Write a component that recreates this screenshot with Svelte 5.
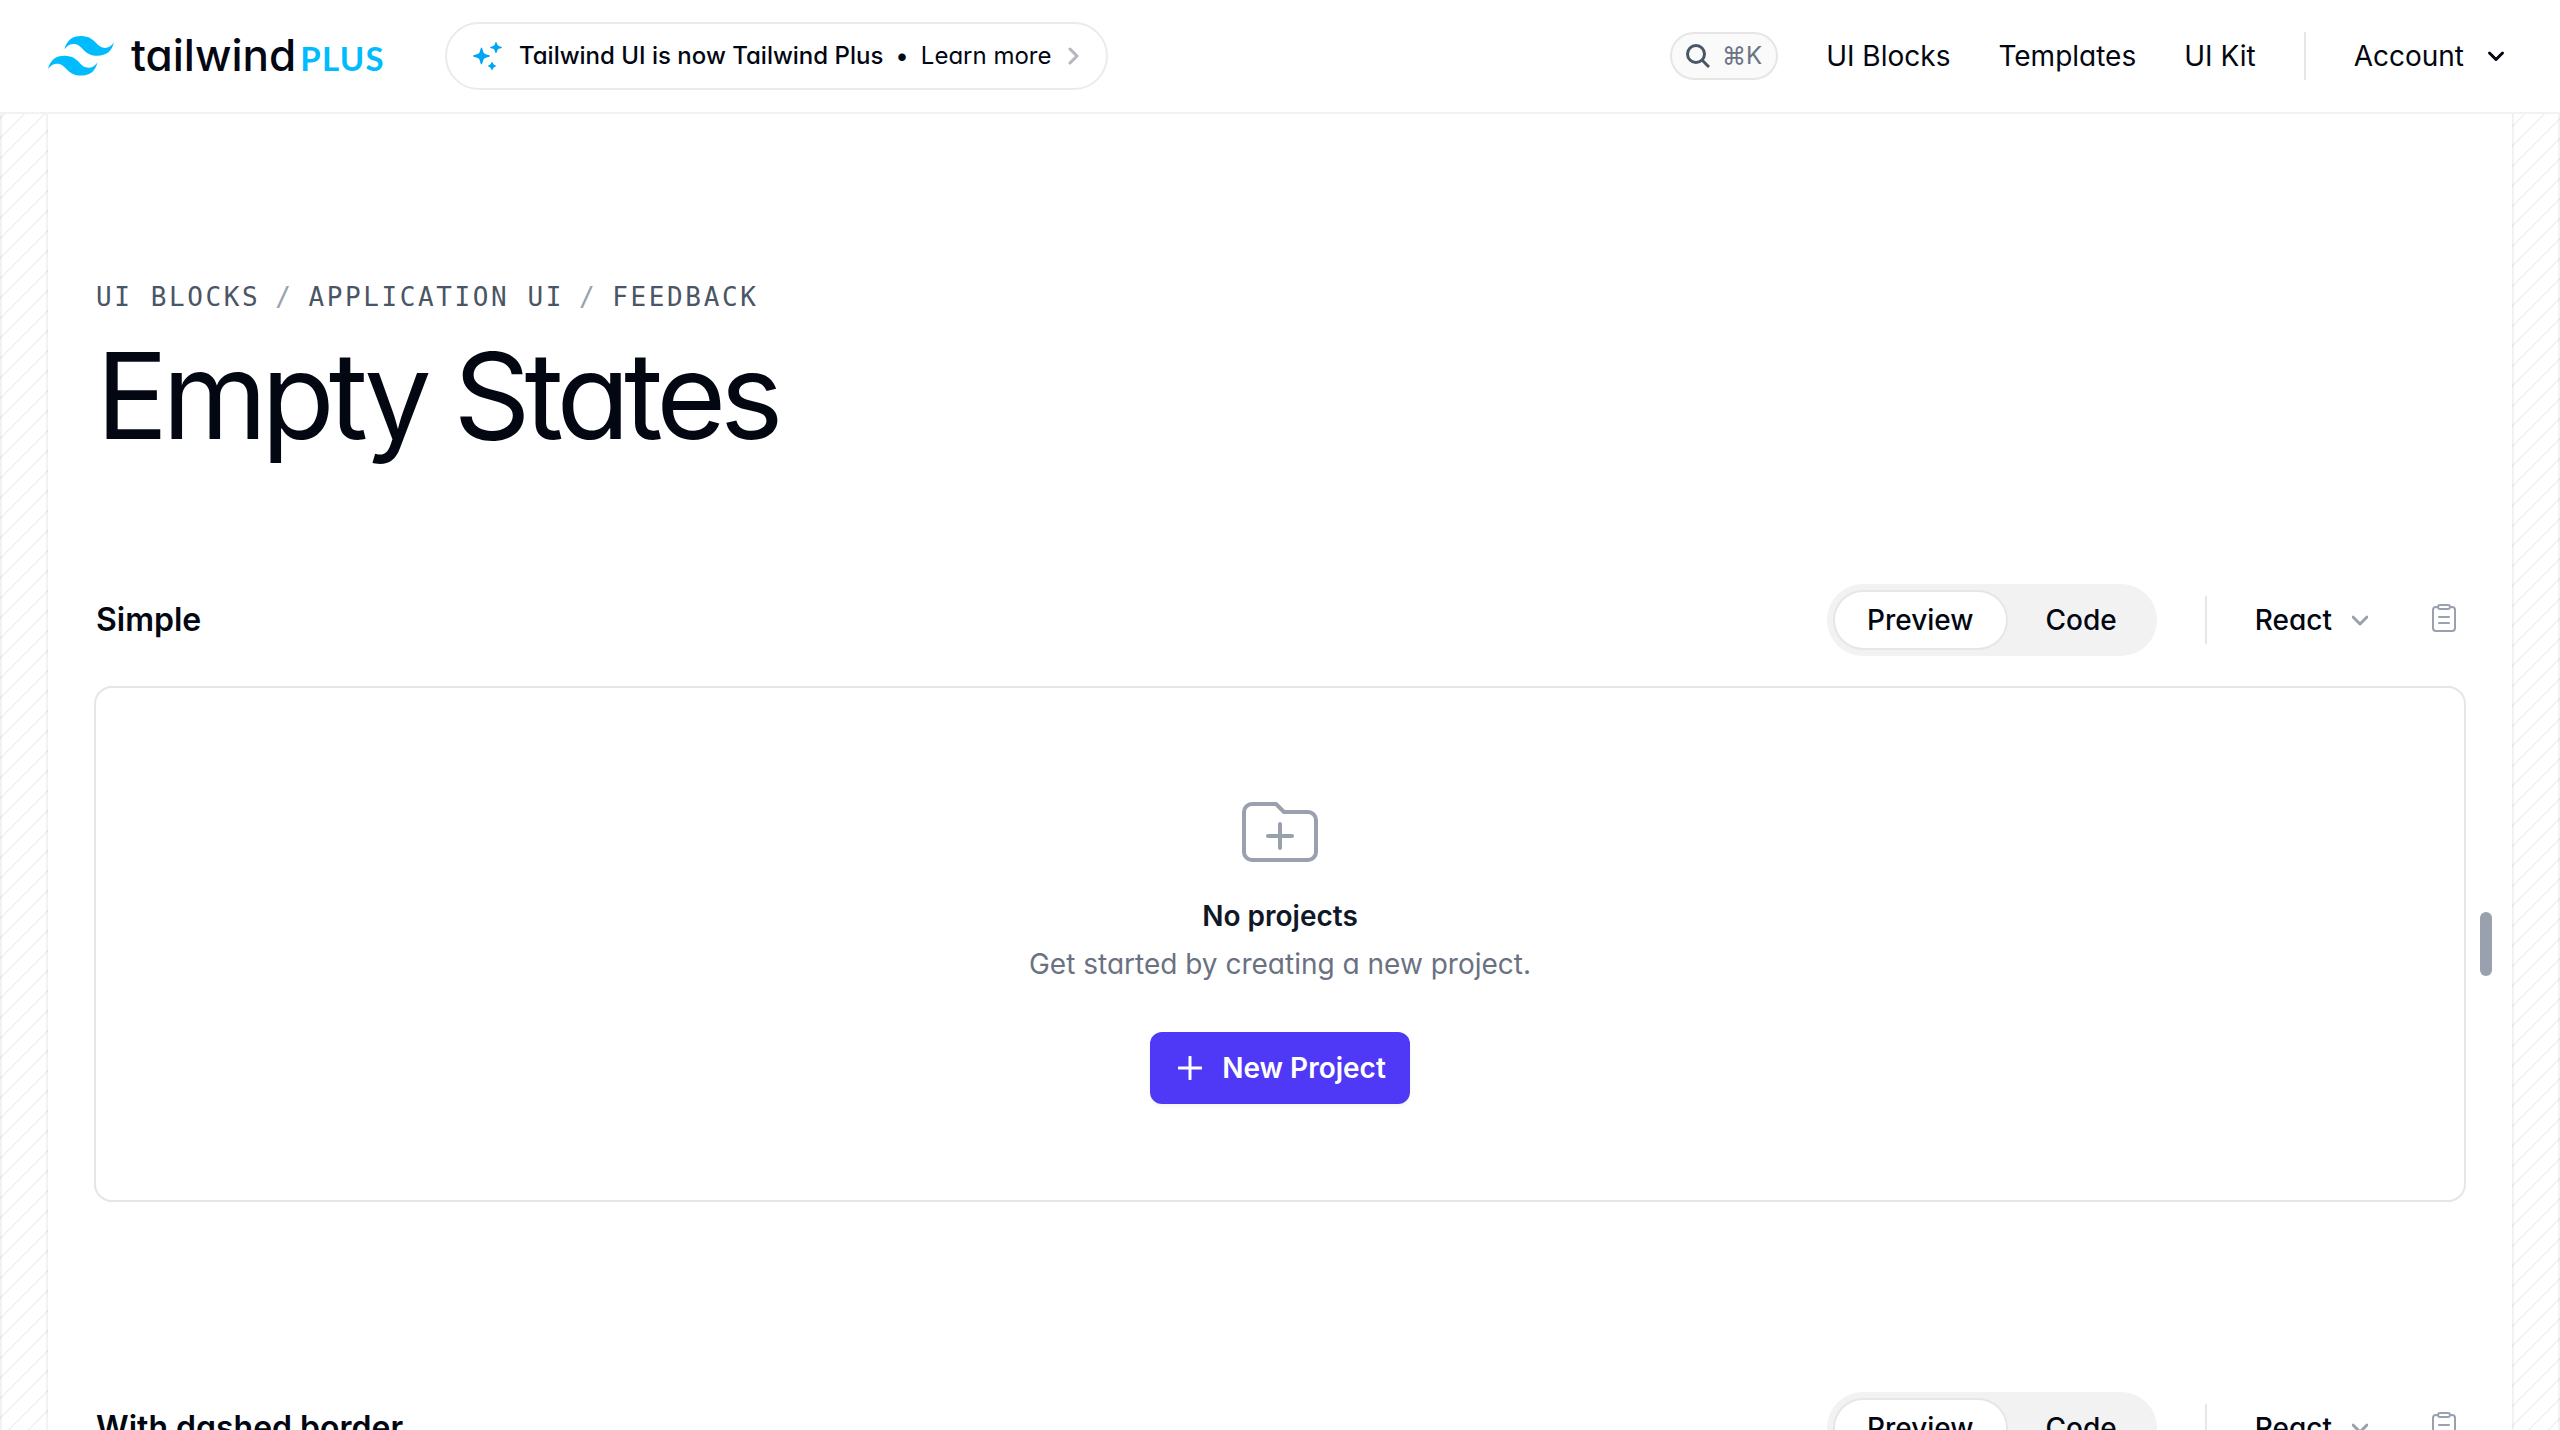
<script>
  const navLinks = ['UI Blocks', 'Templates', 'UI Kit'];
  const crumbs = ['UI Blocks', 'Application UI', 'Feedback'];

  let blocks = $state([
    { id: 'simple', title: 'Simple', tab: 'Preview', language: 'React' },
    { id: 'dashed', title: 'With dashed border', tab: 'Preview', language: 'React' },
  ]);
</script>

<div class="shell">
  <header class="topbar">
    <a class="logo" href="#home" aria-label="Tailwind Plus home">
      <svg class="mark" viewBox="0 0 54 32.4" aria-hidden="true">
        <path d="M27 0c-7.2 0-11.7 3.6-13.5 10.8 2.7-3.6 5.85-4.95 9.45-4.05 2.054.513 3.522 2.004 5.147 3.653C30.744 13.09 33.808 16.2 40.5 16.2c7.2 0 11.7-3.6 13.5-10.8-2.7 3.6-5.85 4.95-9.45 4.05-2.054-.513-3.522-2.004-5.147-3.653C36.756 3.11 33.692 0 27 0zM13.5 16.2C6.3 16.2 1.8 19.8 0 27c2.7-3.6 5.85-4.95 9.45-4.05 2.054.514 3.522 2.004 5.147 3.653C17.244 29.29 20.308 32.4 27 32.4c7.2 0 11.7-3.6 13.5-10.8-2.7 3.6-5.85 4.95-9.45 4.05-2.054-.513-3.522-2.004-5.147-3.653C23.256 19.31 20.192 16.2 13.5 16.2z" />
      </svg>
      <span class="wordmark">tailwind<span class="plus">PLUS</span></span>
    </a>

    <a class="banner" href="#plus">
      <svg class="sparkles" viewBox="0 0 30 28" aria-hidden="true">
        <path d="M8.500 5.500c1 0 1.500 4.500 2.600 5.800S17 13 17 14s-4.700 1.500-5.900 2.700S9.500 22.500 8.500 22.500s-1.500-4.600-2.600-5.800S0 15 0 14s4.700-1.500 5.900-2.700S7.500 5.500 8.500 5.500z" />
        <path d="M23 0c.9 0 1 2.600 1.900 3.600S29 4.700 29 5.500s-3.200 1-4.100 1.900S23.900 11 23 11s-1-2.700-1.900-3.600S17 6.300 17 5.500s3.200-1 4.100-1.900S22.100 0 23 0z" />
        <path d="M19 20c.7 0 .8 1.500 1.500 2.300S23 23.400 23 24s-1.800.9-2.500 1.700S19.700 28 19 28s-.8-1.500-1.500-2.300S15 24.600 15 24s1.800-.9 2.500-1.700S18.300 20 19 20z" />
      </svg>
      <strong>Tailwind UI is now Tailwind Plus</strong>
      <span>•</span>
      <span>Learn more</span>
      <svg class="more" viewBox="0 0 12 18" aria-hidden="true"><path d="M2 2l7 7-7 7" /></svg>
    </a>

    <nav class="links" aria-label="Main">
      <button class="search" type="button" aria-label="Search">
        <svg viewBox="0 0 24 24" aria-hidden="true"><circle cx="10" cy="10" r="8.500" /><path d="M16 16l7 7" /></svg>
        <kbd>⌘K</kbd>
      </button>
      {#each navLinks as link}
        <a href="#nav">{link}</a>
      {/each}
      <span class="divider"></span>
      <button class="account" type="button" aria-haspopup="menu">
        Account
        <svg viewBox="0 0 32 32" aria-hidden="true"><path d="M9.500 13l6.500 6.500 6.500-6.500" /></svg>
      </button>
    </nav>
  </header>

  <div class="page">
    <div class="gutter"></div>
    <main>
      <nav class="crumbs" aria-label="Breadcrumb">
        {#each crumbs as crumb, i}
          {#if i > 0}<span class="slash">/</span>{/if}
          <a href="#crumb">{crumb}</a>
        {/each}
      </nav>
      <h1>Empty States</h1>

      {#each blocks as block (block.id)}
        <section aria-labelledby={block.id}>
          <div class="bar">
            <h2 id={block.id}>{block.title}</h2>
            <div class="tabs" role="tablist">
              {#each ['Preview', 'Code'] as tab}
                <button
                  type="button"
                  role="tab"
                  aria-selected={block.tab === tab}
                  class:active={block.tab === tab}
                  onclick={() => (block.tab = tab)}>{tab}</button>
              {/each}
            </div>
            <span class="divider"></span>
            <div class="language">
              <select aria-label="Language" bind:value={block.language}>
                <option>React</option>
                <option>Vue</option>
                <option>HTML</option>
              </select>
              <svg viewBox="0 0 16 16" aria-hidden="true"><path d="M1 5l7 7 7-7" /></svg>
            </div>
            <button class="copy" type="button" aria-label="Copy code">
              <svg viewBox="0 0 24 28" aria-hidden="true">
                <path d="M6 3H4a3 3 0 0 0-3 3v18a3 3 0 0 0 3 3h16a3 3 0 0 0 3-3V6a3 3 0 0 0-3-3h-2" />
                <path d="M8 1h8a2 2 0 0 1 2 2v0a2 2 0 0 1-2 2H8a2 2 0 0 1-2-2v0a2 2 0 0 1 2-2z" />
                <path d="M7 13h10M7 19h10" />
              </svg>
            </button>
          </div>

          <div class="stage">
            <div class="frame">
              <svg class="folder" viewBox="0 0 24 24" aria-hidden="true">
                <path vector-effect="non-scaling-stroke" d="M9 13h6m-3-3v6m-9 1V7a2 2 0 012-2h6l2 2h6a2 2 0 012 2v8a2 2 0 01-2 2H5a2 2 0 01-2-2z" />
              </svg>
              <h3>No projects</h3>
              <p>Get started by creating a new project.</p>
              <button class="primary" type="button">
                <svg viewBox="0 0 24 24" aria-hidden="true"><path d="M12 1v22M1 12h22" /></svg>
                New Project
              </button>
            </div>
            <div class="handle"></div>
          </div>
        </section>
      {/each}
    </main>
    <div class="gutter"></div>
  </div>
</div>

<style>
  :global(body) {
    background: #fff;
    color: #030712;
    font-family: Inter, sans-serif;
    font-feature-settings: 'cv11';
    font-size: 28px;
    line-height: 48px;
  }

  :global(*) {
    box-sizing: border-box;
  }

  a {
    color: inherit;
    text-decoration: none;
  }

  button,
  select {
    margin: 0;
    padding: 0;
    border: 0;
    background: none;
    color: inherit;
    font: inherit;
    font-feature-settings: inherit;
    cursor: pointer;
  }

  svg {
    display: block;
    flex: none;
    fill: none;
    stroke: currentColor;
    stroke-linecap: round;
    stroke-linejoin: round;
  }

  h1,
  h2,
  h3,
  p {
    margin: 0;
  }

  .shell {
    display: flex;
    flex-direction: column;
    height: 100vh;
  }

  .topbar {
    display: flex;
    flex: none;
    align-items: center;
    padding: 22px 48px;
    border-bottom: 2px solid #f2f2f3;
  }

  .logo {
    display: flex;
    align-items: center;
    gap: 17px;
  }

  .mark {
    width: 66px;
    fill: #00bcff;
    stroke: none;
  }

  .wordmark {
    font-size: 44px;
    font-weight: 500;
  }

  .plus {
    margin-left: 4px;
    color: #00bcff;
    font-family: Lato, sans-serif;
    font-size: 33px;
    font-weight: 700;
    letter-spacing: 0.04em;
  }

  .banner {
    display: flex;
    align-items: center;
    gap: 12px;
    height: 68px;
    margin-left: 60px;
    padding: 0 26px;
    border: 2px solid #ebebec;
    border-radius: 34px;
    font-size: 24px;
  }

  .banner strong {
    font-weight: 500;
  }

  .sparkles {
    width: 30px;
    height: 28px;
    margin-right: 4px;
    fill: #00a6f4;
    stroke: none;
  }

  .more {
    width: 12px;
    height: 18px;
    margin-left: 4px;
    color: #b5b7bc;
    stroke-width: 3;
  }

  .links {
    display: flex;
    align-items: center;
    gap: 48px;
    margin-left: auto;
  }

  .search {
    display: flex;
    align-items: center;
    gap: 12px;
    height: 48px;
    padding: 0 14px;
    border: 2px solid #e6e6e7;
    border-radius: 24px;
    background: #fafafa;
    color: #4a5565;
  }

  .search svg {
    width: 24px;
    height: 24px;
    stroke-width: 3;
    stroke-linecap: butt;
  }

  kbd {
    color: #6a7282;
    font-family: inherit;
    font-size: 24px;
  }

  .divider {
    width: 2px;
    height: 48px;
    background: #e6e6e7;
  }

  .account {
    display: flex;
    align-items: center;
    gap: 16px;
  }

  .account svg {
    width: 32px;
    height: 32px;
    stroke-width: 3;
  }

  .page {
    display: flex;
    flex: 1;
    min-height: 0;
    overflow: hidden;
  }

  .gutter {
    flex: none;
    width: 48px;
    border: solid rgb(3 7 18 / 5%);
    border-width: 0 2px;
    background-image: repeating-linear-gradient(315deg, rgb(3 7 18 / 6%) 0, rgb(3 7 18 / 6%) 2px, transparent 0, transparent 50%);
    background-size: 20px 20px;
    background-attachment: fixed;
  }

  main {
    flex: 1;
    min-width: 0;
    padding: 160px 48px 0;
  }

  .crumbs {
    display: flex;
    gap: 15px;
    color: #4a5565;
    font-family: 'DejaVu Sans Mono', monospace;
    font-size: 26px;
    letter-spacing: 0.1em;
    line-height: 46px;
    text-transform: uppercase;
  }

  .slash {
    color: #99a1af;
  }

  h1 {
    margin: 16px 0 128px;
    font-size: 120px;
    font-weight: 400;
    letter-spacing: -0.05em;
    line-height: 120px;
  }

  section {
    margin-bottom: 192px;
  }

  .bar {
    display: flex;
    align-items: center;
    gap: 48px;
    margin-bottom: 32px;
    font-weight: 500;
  }

  h2 {
    flex: 1;
    font-size: 32px;
    font-weight: 600;
  }

  .tabs {
    display: flex;
    gap: 8px;
    padding: 8px;
    border-radius: 36px;
    background: #f2f2f3;
  }

  .tabs button {
    height: 56px;
    padding: 0 32px;
    border-radius: 28px;
  }

  .tabs .active {
    background: #fff;
    box-shadow: 0 0 0 2px #e6e6e7;
  }

  .language {
    display: flex;
    align-items: center;
    gap: 20px;
    color: #99a1af;
  }

  .language select {
    appearance: none;
    field-sizing: content;
    color: #030712;
  }

  .language svg {
    width: 16px;
    height: 16px;
    stroke-width: 3;
  }

  .copy {
    padding: 0 8px 4px 16px;
    color: #99a1af;
  }

  .copy svg {
    width: 24px;
    height: 28px;
    stroke-width: 2;
  }

  .stage {
    position: relative;
  }

  .frame {
    display: flex;
    flex-direction: column;
    align-items: center;
    padding: 96px 48px;
    border-radius: 16px;
    box-shadow: 0 0 0 2px #e5e5e6;
  }

  .folder {
    width: 96px;
    height: 96px;
    color: #99a1af;
    stroke-width: 4;
  }

  h3 {
    margin-top: 16px;
    color: #101828;
    font-size: 28px;
    font-weight: 600;
    line-height: 40px;
  }

  p {
    margin-top: 8px;
    color: #6a7282;
    line-height: 40px;
  }

  .primary {
    display: flex;
    align-items: center;
    gap: 20px;
    height: 72px;
    margin-top: 48px;
    padding: 0 24px 0 28px;
    border-radius: 12px;
    background: #4f39f6;
    box-shadow: 0 2px 4px rgb(0 0 0 / 5%);
    color: #fff;
    font-weight: 600;
  }

  .primary svg {
    width: 24px;
    height: 24px;
    stroke-width: 3;
  }

  .handle {
    position: absolute;
    top: calc(50% - 32px);
    right: -28px;
    width: 12px;
    height: 64px;
    border-radius: 6px;
    background: #99a1af;
  }
</style>
